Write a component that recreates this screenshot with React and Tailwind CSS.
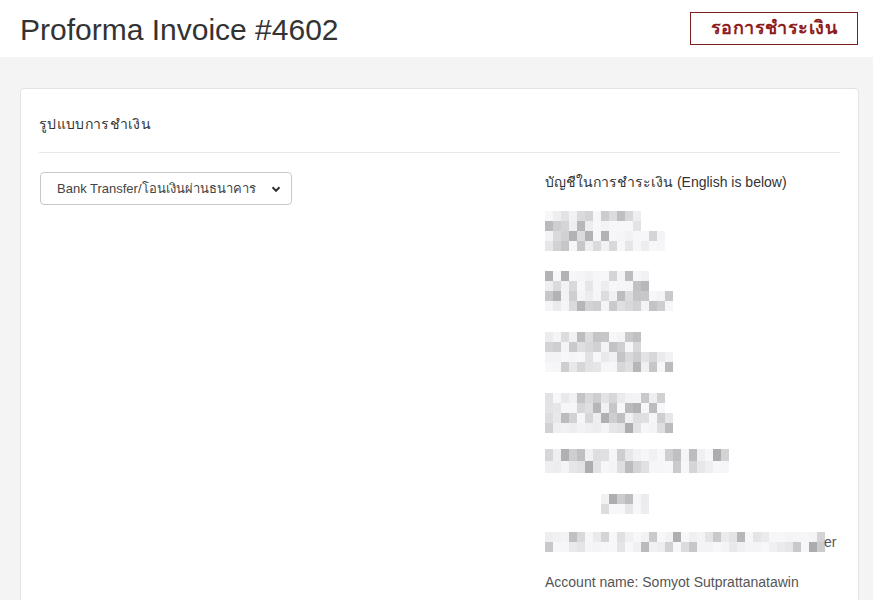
import React from "react";

// pseudo-random grey for the blurred (pixelated) account details
const shade = (seed) => {
  const x = Math.sin(seed * 12.9898) * 43758.5453;
  const r = x - Math.floor(x);
  const v = Math.round(247 - r * r * r * 75);
  return `rgb(${v},${v},${v + 2})`;
};

const Mosaic = ({ lines, seed, offset = 0, cell = 10 }) => {
  const rows = lines.flatMap((w) => [w, w]);
  const width = Math.max(...lines) + offset;
  return (
    <svg width={width} height={rows.length * cell} className="block">
      {rows.map((w, r) =>
        Array.from({ length: Math.ceil(w / 8) }).map((_, c) => (
          <rect
            key={`${r}-${c}`}
            x={offset + c * 8}
            y={r * cell}
            width="8"
            height={cell}
            fill={shade(seed * 97 + r * 31 + c * 7)}
          />
        ))
      )}
    </svg>
  );
};

const groups = [
  { lines: [96, 120], seed: 1, cls: "mt-[19px]" },
  { lines: [104, 128], seed: 2, cls: "mt-[20px]" },
  { lines: [96, 128], seed: 3, cls: "mt-[21px]" },
  { lines: [120, 128], seed: 4, cls: "mt-[21px]" },
];

export default function App() {
  return (
    <div
      className="min-h-[600px] bg-[#f4f4f5] text-[#333]"
      style={{ fontFamily: '"Liberation Sans", "Noto Sans", Arial, sans-serif' }}
    >
      <header className="bg-white h-[57px] flex items-center justify-between pl-[20px] pr-[15px]">
        <h1 className="text-[30px] leading-none font-normal text-[#333] pt-[2px]">
          Proforma Invoice #4602
        </h1>
        <span className="border border-[#7d1f1f] h-[33px] w-[168px] flex items-center justify-center text-[18px] font-bold text-[#8f1d1d] tracking-wide">
          รอการชำระเงิน
        </span>
      </header>

      <div className="px-[20px] pt-[31px] pr-[14px]">
        <div className="bg-white border border-[#e3e3e3] rounded-[4px] h-[520px] overflow-hidden">
          <div className="mx-[18px] pt-[25px] pb-[17px] border-b border-[#e8e8e8] text-[14px] tracking-wide">
            รูปแบบการชำเงิน
          </div>

          <div className="flex pt-[19px]">
            <div className="w-[524px] pl-[19px]">
              <div className="w-[252px] h-[33px] border border-[#c8c8c8] rounded-[4px] flex items-center justify-between pl-[16px] pr-[10px] text-[13px] text-[#444] whitespace-nowrap">
                <span>Bank Transfer/โอนเงินผ่านธนาคาร</span>
                <svg width="10" height="10" viewBox="0 0 10 10" className="shrink-0">
                  <path d="M1.5 3.2 5 6.8 8.5 3.2" fill="none" stroke="#333" strokeWidth="2" />
                </svg>
              </div>
            </div>

            <div className="flex-1 text-[14px]">
              <div className="leading-[20px]">บัญชีในการชำระเงิน (English is below)</div>
              {groups.map((g) => (
                <div key={g.seed} className={g.cls}>
                  <Mosaic lines={g.lines} seed={g.seed} />
                </div>
              ))}
              <div className="mt-[16px]">
                <Mosaic lines={[184]} seed={5} cell={12} />
              </div>
              <div className="mt-[21px]">
                <Mosaic lines={[48]} seed={6} offset={56} />
              </div>
              <div className="mt-[18px] flex items-end">
                <Mosaic lines={[280]} seed={7} />
                <span className="text-[#555] leading-[20px] -ml-[1px]">er</span>
              </div>
              <div className="mt-[22px] text-[#555] leading-[16px] whitespace-nowrap">
                Account name: Somyot Sutprattanatawin
              </div>
            </div>
          </div>
        </div>
      </div>
    </div>
  );
}
